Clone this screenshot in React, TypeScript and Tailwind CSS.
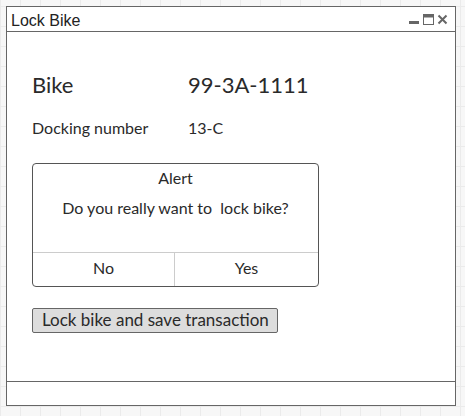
import React from "react";

const gridStyle =
  "bg-[#f7f7f7] bg-[linear-gradient(to_right,#ebebeb_1px,transparent_1px),linear-gradient(to_bottom,#ebebeb_1px,transparent_1px)] bg-[size:20px_20px] bg-[position:20px_6px]";

export default function App() {
  return (
    <div className={`w-[465px] h-[416px] pt-[6px] pl-[6px] ${gridStyle}`}>
      <div className="w-[450px] h-[400px] bg-white border border-[#666] flex flex-col text-[#2a2a2a]">
        {/* Title bar */}
        <div className="h-[25px] border-b border-[#666] flex items-center justify-between pl-[4px] pr-[6px]">
          <span className="text-[16px] leading-none mt-[4px] font-['Liberation_Sans',Arial,sans-serif] text-[#222]">
            Lock Bike
          </span>
          <svg width="40" height="12" viewBox="0 0 40 12" className="mt-[1px]">
            <rect x="0" y="7" width="10" height="3" fill="#666" />
            <rect x="14.5" y="0.5" width="10" height="10" fill="none" stroke="#666" strokeWidth="1" />
            <rect x="14.5" y="0.5" width="10" height="3" fill="#666" />
            <path d="M29.5 1.5 L37.5 9.5 M37.5 1.5 L29.5 9.5" stroke="#666" strokeWidth="2" />
          </svg>
        </div>

        {/* Main */}
        <div className="flex-1 pl-[25px] pt-[36px] font-['Lato',sans-serif]">
          <div className="flex h-[32px] items-center text-[22px]">
            <span className="w-[156px]">Bike</span>
            <span>99-3A-1111</span>
          </div>
          <div className="flex h-[24px] items-center text-[16px] mt-[16px]">
            <span className="w-[156px]">Docking number</span>
            <span>13-C</span>
          </div>

          <div className="mt-[23px] w-[287px] h-[124px] border border-[#555] rounded-[4px] flex flex-col">
            <div className="flex-1 flex flex-col items-center">
              <div className="text-[16px] h-[28px] flex items-center">Alert</div>
              <div className="text-[16px] h-[32px] flex items-center">Do you really want to&nbsp; lock bike?</div>
            </div>
            <div className="h-[34px] border-t border-[#ccc] flex text-[16px] leading-none">
              <div className="w-[142px] border-r border-[#ccc] flex items-center justify-center pb-[3px]">No</div>
              <div className="flex-1 flex items-center justify-center pb-[3px]">Yes</div>
            </div>
          </div>

          <button className="mt-[21px] w-[246px] h-[25px] bg-[#ddd] border border-[#666] rounded-[2px] text-[17px] text-left pl-[9px] pb-[2px] leading-none text-[#2a2a2a]">
            Lock bike and save transaction
          </button>
        </div>

        {/* Footer */}
        <div className="h-[24px] border-t border-[#666]" />
      </div>
    </div>
  );
}
